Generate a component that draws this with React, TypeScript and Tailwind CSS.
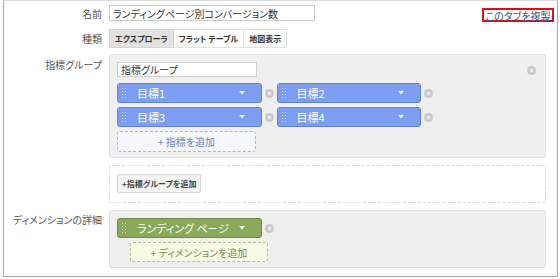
import React from "react";

const FONT = { fontFamily: '"Noto Sans CJK JP", "Noto Sans", sans-serif' };

// small grey round "remove" button next to each chip
function RemoveDot() {
  return (
    <svg width="9" height="9" viewBox="0 0 9 9" className="shrink-0">
      <circle cx="4.5" cy="4.5" r="4.5" fill="#c9c9c9" />
      <path d="M3 3l3 3M6 3l-3 3" stroke="#f2f2f2" strokeWidth="1.2" />
    </svg>
  );
}

function Grip({ color }: { color: string }) {
  return (
    <svg width="4" height="11" viewBox="0 0 4 11" className="shrink-0">
      {[0, 3, 6, 9].map((y) => (
        <g key={y} fill={color}>
          <rect x="0" y={y} width="1" height="1" />
          <rect x="3" y={y} width="1" height="1" />
        </g>
      ))}
    </svg>
  );
}

function Chip({ label, tone }: { label: string; tone: "blue" | "green" }) {
  const cls =
    tone === "blue"
      ? "bg-[#7d9ef0] border-[#5f82dc]"
      : "bg-[#8aa95a] border-[#6e8c43]";
  return (
    <div className="flex items-center gap-[3px]">
      <div
        className={`flex h-[20px] w-[145px] items-center rounded-[3px] border pl-[4px] pr-[16px] text-[11px] text-white ${cls}`}
      >
        <Grip color={tone === "blue" ? "#c8d6fa" : "#d2e0b8"} />
        <span className="ml-[11px] flex-1 whitespace-nowrap leading-none">{label}</span>
        <svg width="6" height="4" viewBox="0 0 6 4">
          <path d="M0 0h6L3 3.5z" fill="#eef2fd" />
        </svg>
      </div>
      <RemoveDot />
    </div>
  );
}

function Label({ children }: { children: React.ReactNode }) {
  return (
    <div className="w-[98px] shrink-0 whitespace-nowrap text-right text-[10px] text-[#555]">
      {children}
    </div>
  );
}

export default function App() {
  return (
    <div
      className="h-[279px] w-[560px] bg-white [font-feature-settings:'palt']"
      style={FONT}
    >
      <div className="ml-[3px] h-[277px] w-[555px] border border-x-[#a9a9a9] border-b-[#a9a9a9] border-t-[#dcdcdc] bg-white pt-[4px]">
        {/* name */}
        <div className="flex h-[16px] items-center gap-[7px]">
          <Label>名前</Label>
          <div className="flex h-[16px] w-[206px] items-center whitespace-nowrap border border-[#c9c9c9] px-[3px] text-[10px] text-[#333]">
            ランディングページ別コンバージョン数
          </div>
          <div className="ml-auto mr-[3px] mt-[4px] flex h-[14px] w-[72px] items-center justify-center whitespace-nowrap border-2 border-[#d0141c] text-[10px] text-[#3e5a86]">
            このタブを複製
          </div>
        </div>

        {/* type */}
        <div className="mt-[8px] flex items-center gap-[7px]">
          <Label>種類</Label>
          <div className="flex h-[19px] whitespace-nowrap text-[8px] font-bold text-[#333]">
            <div className="flex items-center justify-center border border-[#d4d4d4] bg-[#e2e2e2] px-[5px]">
              エクスプローラ
            </div>
            <div className="flex items-center justify-center border-y border-r border-[#e2e2e2] bg-white px-[5px]">
              フラット テーブル
            </div>
            <div className="flex items-center justify-center border-y border-r border-[#e2e2e2] bg-white px-[5px]">
              地図表示
            </div>
          </div>
        </div>

        {/* metric groups */}
        <div className="mt-[6px] flex gap-[7px]">
          <div className="pt-[3px]">
            <Label>指標グループ</Label>
          </div>
          <div className="h-[104px] w-[437px] rounded-[3px] border border-[#e1e1e1] bg-[#efefef] px-[7px] pt-[7px]">
            <div className="flex items-start justify-between">
              <div className="flex h-[15px] w-[140px] items-center border border-[#cfcfcf] bg-white px-[3px] text-[10px] text-[#333]">
                指標グループ
              </div>
              <div className="mr-[2px] mt-[4px]">
                <RemoveDot />
              </div>
            </div>
            <div className="mt-[6px] grid w-[316px] grid-cols-2 gap-x-[3px] gap-y-[4px]">
              <Chip label="目標1" tone="blue" />
              <Chip label="目標2" tone="blue" />
              <Chip label="目標3" tone="blue" />
              <Chip label="目標4" tone="blue" />
            </div>
            <div className="mt-[4px] flex h-[21px] w-[139px] items-center justify-center rounded-[3px] border border-dashed border-[#a8b6d4] bg-[#f6f8fd] text-[10px] text-[#6880c2]">
              + 指標を追加
            </div>
          </div>
        </div>

        {/* add metric group */}
        <div className="mt-[7px] flex gap-[7px]">
          <div className="w-[98px] shrink-0" />
          <div className="h-[38px] w-[437px] rounded-[3px] border border-dashed border-[#d8d8d8] px-[7px] pt-[8px]">
            <div className="flex h-[19px] w-fit items-center justify-center whitespace-nowrap rounded-[2px] border border-[#d8d8d8] bg-[#f3f3f3] px-[4px] text-[8px] font-bold text-[#444]">
              +指標グループを追加
            </div>
          </div>
        </div>

        {/* dimension */}
        <div className="mt-[7px] flex gap-[7px]">
          <div className="pt-[2px]">
            <Label>ディメンションの詳細</Label>
          </div>
          <div className="h-[58px] w-[437px] rounded-[3px] border border-[#e1e1e1] bg-[#efefef] px-[7px] pt-[7px]">
            <Chip label="ランディング ページ" tone="green" />
            <div className="ml-[13px] mt-[4px] flex h-[20px] w-[138px] items-center justify-center whitespace-nowrap rounded-[3px] border border-dashed border-[#b3bf8c] bg-[#f8fbe6] text-[10px] text-[#7b8a5c]">
              + ディメンションを追加
            </div>
          </div>
        </div>
      </div>
    </div>
  );
}
